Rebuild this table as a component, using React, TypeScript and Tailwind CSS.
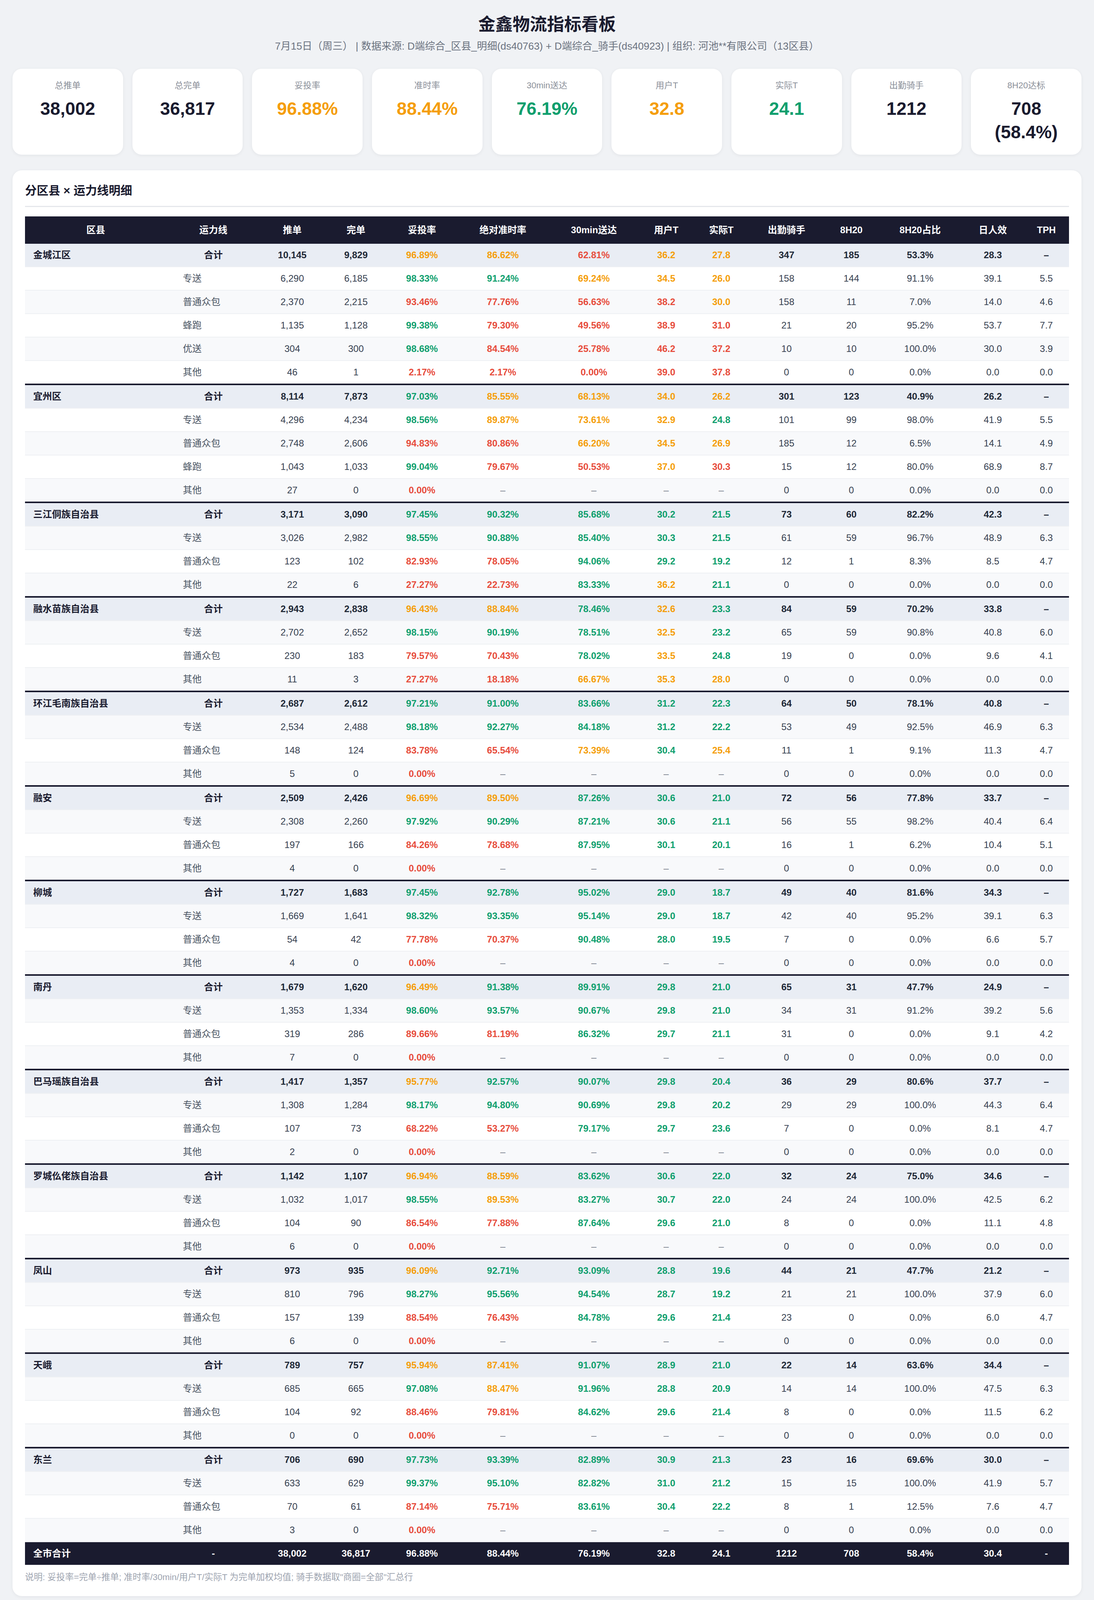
import React from 'react';

type Row = string[];
interface Group {
  name: string;
  rows: Row[];
}

const groups: Group[] = [
  {
    name: '金城江区',
    rows: [
      ['合计', '10,145', '9,829', '96.89%', '86.62%', '62.81%', '36.2', '27.8', '347', '185', '53.3%', '28.3', '–'],
      ['专送', '6,290', '6,185', '98.33%', '91.24%', '69.24%', '34.5', '26.0', '158', '144', '91.1%', '39.1', '5.5'],
      ['普通众包', '2,370', '2,215', '93.46%', '77.76%', '56.63%', '38.2', '30.0', '158', '11', '7.0%', '14.0', '4.6'],
      ['蜂跑', '1,135', '1,128', '99.38%', '79.30%', '49.56%', '38.9', '31.0', '21', '20', '95.2%', '53.7', '7.7'],
      ['优送', '304', '300', '98.68%', '84.54%', '25.78%', '46.2', '37.2', '10', '10', '100.0%', '30.0', '3.9'],
      ['其他', '46', '1', '2.17%', '2.17%', '0.00%', '39.0', '37.8', '0', '0', '0.0%', '0.0', '0.0'],
    ],
  },
  {
    name: '宜州区',
    rows: [
      ['合计', '8,114', '7,873', '97.03%', '85.55%', '68.13%', '34.0', '26.2', '301', '123', '40.9%', '26.2', '–'],
      ['专送', '4,296', '4,234', '98.56%', '89.87%', '73.61%', '32.9', '24.8', '101', '99', '98.0%', '41.9', '5.5'],
      ['普通众包', '2,748', '2,606', '94.83%', '80.86%', '66.20%', '34.5', '26.9', '185', '12', '6.5%', '14.1', '4.9'],
      ['蜂跑', '1,043', '1,033', '99.04%', '79.67%', '50.53%', '37.0', '30.3', '15', '12', '80.0%', '68.9', '8.7'],
      ['其他', '27', '0', '0.00%', '–', '–', '–', '–', '0', '0', '0.0%', '0.0', '0.0'],
    ],
  },
  {
    name: '三江侗族自治县',
    rows: [
      ['合计', '3,171', '3,090', '97.45%', '90.32%', '85.68%', '30.2', '21.5', '73', '60', '82.2%', '42.3', '–'],
      ['专送', '3,026', '2,982', '98.55%', '90.88%', '85.40%', '30.3', '21.5', '61', '59', '96.7%', '48.9', '6.3'],
      ['普通众包', '123', '102', '82.93%', '78.05%', '94.06%', '29.2', '19.2', '12', '1', '8.3%', '8.5', '4.7'],
      ['其他', '22', '6', '27.27%', '22.73%', '83.33%', '36.2', '21.1', '0', '0', '0.0%', '0.0', '0.0'],
    ],
  },
  {
    name: '融水苗族自治县',
    rows: [
      ['合计', '2,943', '2,838', '96.43%', '88.84%', '78.46%', '32.6', '23.3', '84', '59', '70.2%', '33.8', '–'],
      ['专送', '2,702', '2,652', '98.15%', '90.19%', '78.51%', '32.5', '23.2', '65', '59', '90.8%', '40.8', '6.0'],
      ['普通众包', '230', '183', '79.57%', '70.43%', '78.02%', '33.5', '24.8', '19', '0', '0.0%', '9.6', '4.1'],
      ['其他', '11', '3', '27.27%', '18.18%', '66.67%', '35.3', '28.0', '0', '0', '0.0%', '0.0', '0.0'],
    ],
  },
  {
    name: '环江毛南族自治县',
    rows: [
      ['合计', '2,687', '2,612', '97.21%', '91.00%', '83.66%', '31.2', '22.3', '64', '50', '78.1%', '40.8', '–'],
      ['专送', '2,534', '2,488', '98.18%', '92.27%', '84.18%', '31.2', '22.2', '53', '49', '92.5%', '46.9', '6.3'],
      ['普通众包', '148', '124', '83.78%', '65.54%', '73.39%', '30.4', '25.4', '11', '1', '9.1%', '11.3', '4.7'],
      ['其他', '5', '0', '0.00%', '–', '–', '–', '–', '0', '0', '0.0%', '0.0', '0.0'],
    ],
  },
  {
    name: '融安',
    rows: [
      ['合计', '2,509', '2,426', '96.69%', '89.50%', '87.26%', '30.6', '21.0', '72', '56', '77.8%', '33.7', '–'],
      ['专送', '2,308', '2,260', '97.92%', '90.29%', '87.21%', '30.6', '21.1', '56', '55', '98.2%', '40.4', '6.4'],
      ['普通众包', '197', '166', '84.26%', '78.68%', '87.95%', '30.1', '20.1', '16', '1', '6.2%', '10.4', '5.1'],
      ['其他', '4', '0', '0.00%', '–', '–', '–', '–', '0', '0', '0.0%', '0.0', '0.0'],
    ],
  },
  {
    name: '柳城',
    rows: [
      ['合计', '1,727', '1,683', '97.45%', '92.78%', '95.02%', '29.0', '18.7', '49', '40', '81.6%', '34.3', '–'],
      ['专送', '1,669', '1,641', '98.32%', '93.35%', '95.14%', '29.0', '18.7', '42', '40', '95.2%', '39.1', '6.3'],
      ['普通众包', '54', '42', '77.78%', '70.37%', '90.48%', '28.0', '19.5', '7', '0', '0.0%', '6.6', '5.7'],
      ['其他', '4', '0', '0.00%', '–', '–', '–', '–', '0', '0', '0.0%', '0.0', '0.0'],
    ],
  },
  {
    name: '南丹',
    rows: [
      ['合计', '1,679', '1,620', '96.49%', '91.38%', '89.91%', '29.8', '21.0', '65', '31', '47.7%', '24.9', '–'],
      ['专送', '1,353', '1,334', '98.60%', '93.57%', '90.67%', '29.8', '21.0', '34', '31', '91.2%', '39.2', '5.6'],
      ['普通众包', '319', '286', '89.66%', '81.19%', '86.32%', '29.7', '21.1', '31', '0', '0.0%', '9.1', '4.2'],
      ['其他', '7', '0', '0.00%', '–', '–', '–', '–', '0', '0', '0.0%', '0.0', '0.0'],
    ],
  },
  {
    name: '巴马瑶族自治县',
    rows: [
      ['合计', '1,417', '1,357', '95.77%', '92.57%', '90.07%', '29.8', '20.4', '36', '29', '80.6%', '37.7', '–'],
      ['专送', '1,308', '1,284', '98.17%', '94.80%', '90.69%', '29.8', '20.2', '29', '29', '100.0%', '44.3', '6.4'],
      ['普通众包', '107', '73', '68.22%', '53.27%', '79.17%', '29.7', '23.6', '7', '0', '0.0%', '8.1', '4.7'],
      ['其他', '2', '0', '0.00%', '–', '–', '–', '–', '0', '0', '0.0%', '0.0', '0.0'],
    ],
  },
  {
    name: '罗城仫佬族自治县',
    rows: [
      ['合计', '1,142', '1,107', '96.94%', '88.59%', '83.62%', '30.6', '22.0', '32', '24', '75.0%', '34.6', '–'],
      ['专送', '1,032', '1,017', '98.55%', '89.53%', '83.27%', '30.7', '22.0', '24', '24', '100.0%', '42.5', '6.2'],
      ['普通众包', '104', '90', '86.54%', '77.88%', '87.64%', '29.6', '21.0', '8', '0', '0.0%', '11.1', '4.8'],
      ['其他', '6', '0', '0.00%', '–', '–', '–', '–', '0', '0', '0.0%', '0.0', '0.0'],
    ],
  },
  {
    name: '凤山',
    rows: [
      ['合计', '973', '935', '96.09%', '92.71%', '93.09%', '28.8', '19.6', '44', '21', '47.7%', '21.2', '–'],
      ['专送', '810', '796', '98.27%', '95.56%', '94.54%', '28.7', '19.2', '21', '21', '100.0%', '37.9', '6.0'],
      ['普通众包', '157', '139', '88.54%', '76.43%', '84.78%', '29.6', '21.4', '23', '0', '0.0%', '6.0', '4.7'],
      ['其他', '6', '0', '0.00%', '–', '–', '–', '–', '0', '0', '0.0%', '0.0', '0.0'],
    ],
  },
  {
    name: '天峨',
    rows: [
      ['合计', '789', '757', '95.94%', '87.41%', '91.07%', '28.9', '21.0', '22', '14', '63.6%', '34.4', '–'],
      ['专送', '685', '665', '97.08%', '88.47%', '91.96%', '28.8', '20.9', '14', '14', '100.0%', '47.5', '6.3'],
      ['普通众包', '104', '92', '88.46%', '79.81%', '84.62%', '29.6', '21.4', '8', '0', '0.0%', '11.5', '6.2'],
      ['其他', '0', '0', '0.00%', '–', '–', '–', '–', '0', '0', '0.0%', '0.0', '0.0'],
    ],
  },
  {
    name: '东兰',
    rows: [
      ['合计', '706', '690', '97.73%', '93.39%', '82.89%', '30.9', '21.3', '23', '16', '69.6%', '30.0', '–'],
      ['专送', '633', '629', '99.37%', '95.10%', '82.82%', '31.0', '21.2', '15', '15', '100.0%', '41.9', '5.7'],
      ['普通众包', '70', '61', '87.14%', '75.71%', '83.61%', '30.4', '22.2', '8', '1', '12.5%', '7.6', '4.7'],
      ['其他', '3', '0', '0.00%', '–', '–', '–', '–', '0', '0', '0.0%', '0.0', '0.0'],
    ],
  },
];

const cityTotal = ['38,002', '36,817', '96.88%', '88.44%', '76.19%', '32.8', '24.1', '1212', '708', '58.4%', '30.4', '-'];

type Kind = 'tt' | 'ot' | 'm30' | 'ut' | 'rt';

const GREEN = 'text-[#0f9f6e]';
const ORANGE = 'text-[#f59e0b]';
const RED = 'text-[#e74c3c]';

// 阈值: 妥投率 97/95, 准时率 90/85, 30min 75/65, 用户T 32/37, 实际T 25/30
function tone(kind: Kind, v: string): string {
  const n = parseFloat(v);
  switch (kind) {
    case 'tt':
      return n >= 97 ? GREEN : n >= 95 ? ORANGE : RED;
    case 'ot':
      return n >= 90 ? GREEN : n >= 85 ? ORANGE : RED;
    case 'm30':
      return n >= 75 ? GREEN : n >= 65 ? ORANGE : RED;
    case 'ut':
      return n <= 32 ? GREEN : n <= 37 ? ORANGE : RED;
    case 'rt':
      return n < 25 ? GREEN : n <= 30 ? ORANGE : RED;
  }
}

const detailKinds: (Kind | null)[] = [null, null, 'tt', 'ot', 'm30', 'ut', 'rt', null, null, null, null, null];

const kpis = [
  { label: '总推单', value: '38,002', color: 'text-[#1a1b2f]' },
  { label: '总完单', value: '36,817', color: 'text-[#1a1b2f]' },
  { label: '妥投率', value: '96.88%', color: ORANGE },
  { label: '准时率', value: '88.44%', color: ORANGE },
  { label: '30min送达', value: '76.19%', color: GREEN },
  { label: '用户T', value: '32.8', color: ORANGE },
  { label: '实际T', value: '24.1', color: GREEN },
  { label: '出勤骑手', value: '1212', color: 'text-[#1a1b2f]' },
  { label: '8H20达标', value: '708 (58.4%)', color: 'text-[#1a1b2f]' },
];

const detailColClass = [
  'w-[362px]', 'w-[240px]', 'w-[164px]', 'w-[162px]', 'w-[176px]', 'w-[238px]', 'w-[228px]',
  'w-[142px]', 'w-[140px]', 'w-[194px]', 'w-[138px]', 'w-[214px]', 'w-[158px]', 'w-[116px]',
];
const detailHead = ['区县', '运力线', '推单', '完单', '妥投率', '绝对准时率', '30min送达', '用户T', '实际T', '出勤骑手', '8H20', '8H20占比', '日人效', 'TPH'];

const sumColClass = [
  'w-[440px]', 'w-[194px]', 'w-[196px]', 'w-[212px]', 'w-[228px]', 'w-[212px]',
  'w-[176px]', 'w-[164px]', 'w-[238px]', 'w-[162px]', 'w-[264px]', 'w-[186px]',
];
const sumHead = ['区县', '推单', '完单', '妥投率', '准时率', '30min', '用户T', '实际T', '出勤骑手', '8H20', '8H20占比', '日人效'];

const Card = ({ children, className = '' }: { children: React.ReactNode; className?: string }) => (
  <section className={`bg-white rounded-[24px] shadow-[0_2px_10px_rgba(15,23,42,0.06)] ${className}`}>{children}</section>
);

const SectionTitle = ({ children }: { children: React.ReactNode }) => (
  <h2 className="text-[30px] leading-[42px] font-bold text-[#1a1b2f] pb-[18px] border-b-[3px] border-[#e5e7eb]">{children}</h2>
);

function valueCell(v: string, kind: Kind | null, bold: boolean, key: number, rowCls: string) {
  const dash = v === '–' || v === '-';
  let cls = bold ? 'font-bold text-[#1f2937]' : 'text-[#374151]';
  if (kind && !dash) cls = `${tone(kind, v)} font-semibold`;
  if (dash) cls = bold ? 'font-bold text-[#1f2937]' : 'text-[#6b7280]';
  return (
    <td key={key} className={`text-center ${rowCls} ${cls}`}>
      {v}
    </td>
  );
}

const DetailTable = () => {
  let idx = 0;
  return (
    <table className="w-full table-fixed border-separate border-spacing-0 mt-[24px] text-[24px]">
      <colgroup>
        {detailColClass.map((c, i) => (
          <col key={i} className={c} />
        ))}
      </colgroup>
      <thead>
        <tr className="bg-[#1a1b2f] text-white">
          {detailHead.map((h) => (
            <th key={h} className="h-[70px] font-bold text-center">
              {h}
            </th>
          ))}
        </tr>
      </thead>
      <tbody>
        {groups.map((g, gi) =>
          g.rows.map((r, ri) => {
            idx += 1;
            const isSum = ri === 0;
            const lastInGroup = ri === g.rows.length - 1 && gi < groups.length - 1;
            const bg = isSum ? 'bg-[#e9edf4]' : idx % 2 === 1 ? 'bg-[#f8f9fb]' : 'bg-white';
            const cellCls = lastInGroup ? 'h-[62px] border-b-4 border-[#1a1b2f]' : 'h-[60px] border-b-2 border-[#eef0f3]';
            return (
              <tr key={`${g.name}-${r[0]}`} className={bg}>
                <td className={`${cellCls} pl-[21px] font-bold text-[#1a1b2f] whitespace-nowrap`}>{isSum ? g.name : ''}</td>
                <td className={`${cellCls} ${isSum ? 'text-center font-bold text-[#1a1b2f]' : 'pl-[42px] text-[#4b5563]'}`}>{r[0]}</td>
                {r.slice(1).map((v, ci) => valueCell(v, detailKinds[ci], isSum, ci, cellCls))}
              </tr>
            );
          })
        )}
        <tr className="bg-[#1a1b2f] text-white font-bold">
          <td className="h-[58px] pl-[21px]">全市合计</td>
          <td className="h-[58px] text-center">-</td>
          {cityTotal.map((v, i) => (
            <td key={i} className="h-[58px] text-center">
              {v}
            </td>
          ))}
        </tr>
      </tbody>
    </table>
  );
};

const SummaryTable = () => (
  <table className="w-full table-fixed border-separate border-spacing-0 mt-[24px] text-[24px]">
    <colgroup>
      {sumColClass.map((c, i) => (
        <col key={i} className={c} />
      ))}
    </colgroup>
    <thead>
      <tr className="bg-[#1a1b2f] text-white">
        {sumHead.map((h) => (
          <th key={h} className="h-[66px] font-bold text-center">
            {h}
          </th>
        ))}
      </tr>
    </thead>
    <tbody>
      {groups.map((g, i) => {
        const r = g.rows[0];
        const bg = i % 2 === 0 ? 'bg-[#f8f9fb]' : 'bg-white';
        const cellCls = 'h-[60px] border-b-2 border-[#eef0f3]';
        return (
          <tr key={g.name} className={bg}>
            <td className={`${cellCls} pl-[21px] font-bold text-[#1a1b2f]`}>{g.name}</td>
            {r.slice(1, 12).map((v, ci) => valueCell(v, detailKinds[ci], false, ci, cellCls))}
          </tr>
        );
      })}
      <tr className="bg-[#1a1b2f] text-white font-bold">
        <td className="h-[58px] text-center">全市合计</td>
        {cityTotal.slice(0, 11).map((v, i) => (
          <td key={i} className="h-[58px] text-center">
            {v}
          </td>
        ))}
      </tr>
    </tbody>
  </table>
);

const concerns = [
  '全市准时率88.44%偏低，金城江区86.62%、宜州区85.55%、融水苗族自治县88.84%、融安89.50%均未达90%，需关注高峰时段运力调配和派单策略优化。',
  '蜂跑/优送30min送达率偏低：金城江区蜂跑49.56%，金城江区优送25.78%，宜州区蜂跑50.53%，拉低全市30min指标（76.19%）。',
  '融水苗族自治县普通众包妥投率79.57%、柳城普通众包妥投率77.78%、巴马瑶族自治县普通众包妥投率68.22%，存在明显异常，建议排查运力缺口及退单原因。',
  '众包8H20达标率偏低：金城江区7.0%、宜州区6.5%、三江侗族自治县8.3%、融水苗族自治县0.0%，反映众包骑手有效工时不足。',
];

export default function App() {
  return (
    <div className="min-h-screen bg-[#f0f2f5] px-8 pt-8 pb-[24px] font-['Liberation_Sans','Noto_Sans_CJK_SC',sans-serif]">
      <header className="text-center">
        <h1 className="text-[44px] leading-[62px] font-bold text-[#1a1b2f]">金鑫物流指标看板</h1>
        <p className="mt-[7px] text-[26px] leading-[34px] text-[#6b7280]">
          7月15日（周三） | 数据来源: D端综合_区县_明细(ds40763) + D端综合_骑手(ds40923) | 组织: 河池**有限公司（13区县）
        </p>
      </header>

      <div className="mt-[41px] grid grid-cols-9 gap-[24px]">
        {kpis.map((k) => (
          <div key={k.label} className="bg-white rounded-[24px] shadow-[0_2px_10px_rgba(15,23,42,0.06)] px-6 pt-[27px] pb-[28px] text-center">
            <div className="text-[22px] leading-[32px] text-[#8a8f99]">{k.label}</div>
            <div className={`mt-[13px] text-[46px] leading-[60px] font-bold ${k.color}`}>{k.value}</div>
          </div>
        ))}
      </div>

      <Card className="mt-[40px] px-8 pt-[31px] pb-[32px]">
        <SectionTitle>分区县 × 运力线明细</SectionTitle>
        <DetailTable />
        <p className="mt-[16px] text-[22.5px] leading-[32px] text-[#9ca3af]">
          说明: 妥投率=完单÷推单; 准时率/30min/用户T/实际T 为完单加权均值; 骑手数据取"商圈=全部"汇总行
        </p>
      </Card>

      <Card className="mt-[32px] px-8 pt-[31px] pb-[32px]">
        <SectionTitle>区县汇总（全运力线合计）</SectionTitle>
        <SummaryTable />
      </Card>

      <Card className="mt-[31px] px-10 pt-[42px] pb-[81px]">
        <h2 className="text-[32px] leading-[45px] font-bold text-[#1a1b2f] pb-[14px] border-b-4 border-[#1a1b2f]">
          7月15日（周三）物流指标简报
        </h2>
        <h3 className="mt-[31px] text-[26px] leading-[36px] font-bold text-[#0f9f6e]">亮点</h3>
        <p className="mt-[18px] text-[26.4px] leading-[45px] text-[#374151]">
          全市推单38,002.0、完单36,817.0，妥投率96.88%整体稳健。柳城30min送达率95.02%、用户T 29.0min领跑全市；凤山准时率92.71%、30min
          93.09%表现优异；天峨准时率87.41%、30min 91.07%表现优异。专送妥投率普遍98%+，8H20达标率多数区县90%以上，骑手出勤质量较好。
        </p>
        <h3 className="mt-[37px] text-[26px] leading-[36px] font-bold text-[#e74c3c]">待关注</h3>
        <ul className="mt-[26px] flex flex-col gap-[18px]">
          {concerns.map((c) => (
            <li key={c} className="flex items-start gap-[14px] pl-[7px] text-[26.4px] leading-[45px] text-[#374151]">
              <span className="mt-[17px] w-[12px] h-[12px] shrink-0 rounded-full bg-[#e74c3c]" />
              <span>{c}</span>
            </li>
          ))}
        </ul>
      </Card>

      <footer className="mt-[34px] text-center text-[22.5px] leading-[32px] text-[#9ca3af]">
        生成时间: 2026-07-16 | 数据日期: 7月15日（周三） | 妥投率=完单÷推单; 准时率/30min/用户T/实际T为完单加权均值; 骑手数据取"商圈=全部"汇总行 | 组织: 河池**有限公司（13区县）
      </footer>
    </div>
  );
}
